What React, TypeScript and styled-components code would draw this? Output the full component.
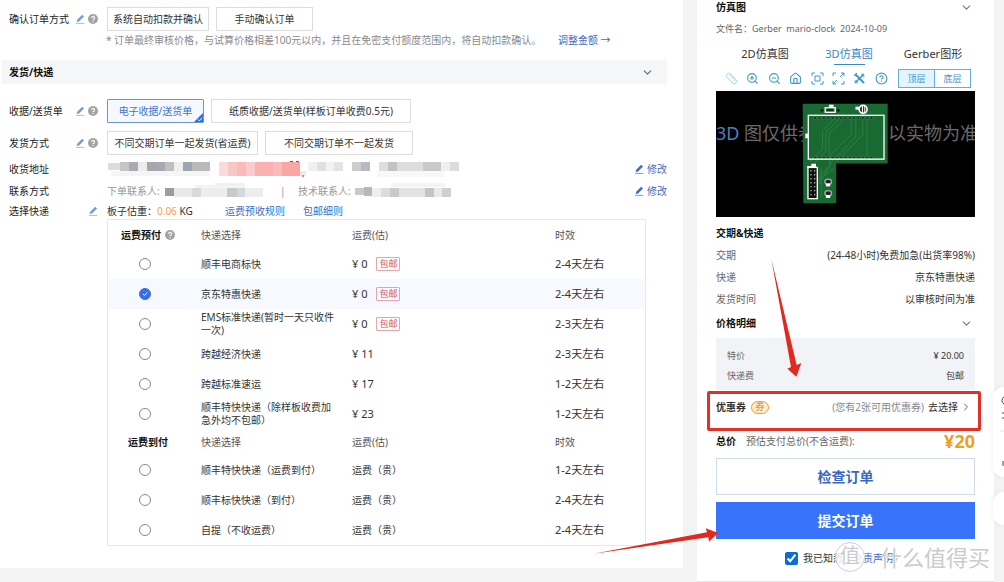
import React, { useState } from "react";
import styled, { createGlobalStyle, css } from "styled-components";
import {
  ChevronDown,
  ChevronRight,
  CircleHelp,
  House,
  Ruler,
  ZoomIn,
  ZoomOut,
} from "lucide-react";

const GlobalStyle = createGlobalStyle`
  * { box-sizing: border-box; }
  body {
    margin: 0;
    background: #f3f3f4;
    color: #333;
    font: 10px/14px "Noto Sans", "Noto Sans CJK SC", sans-serif;
  }
  button, input { font: inherit; color: inherit; margin: 0; }
  button { padding: 0; cursor: pointer; }
  a { color: #3d6cc0; text-decoration: none; }
`;

const Page = styled.div`
  display: flex;
  align-items: flex-start;
  gap: 14px;
  padding-right: 10px;
`;

/* ---------- order form ---------- */

const FormPanel = styled.main`
  flex: 1;
  min-width: 0;
  background: #fff;
  padding: 7px 16px 22px 2px;
`;

const FormRow = styled.div<{ $height?: number; $gap?: number }>`
  display: flex;
  align-items: center;
  min-height: ${(p) => p.$height ?? 24}px;
  margin-top: ${(p) => p.$gap ?? 0}px;
  padding-left: 7px;
`;

const RowLabel = styled.div`
  flex: 0 0 98px;
  display: flex;
  align-items: center;
  gap: 3px;
  padding-right: 9px;
  color: #222;
  svg { display: block; }
`;

const LabelText = styled.span`
  flex: 1;
  white-space: nowrap;
`;

const Options = styled.div`
  display: flex;
  gap: 7px;
`;

const OptionButton = styled.button<{ $width: number; $selected?: boolean }>`
  position: relative;
  width: ${(p) => p.$width}px;
  height: 24px;
  border: 1px solid #dcdcdc;
  background: #fff;
  white-space: nowrap;
  overflow: hidden;
  ${(p) =>
    p.$selected &&
    css`
      border-color: #6d94cf;
      background: #f5f9ff;
      color: #3f74c8;
      border-radius: 1px;
    `}
`;

const SelectedCorner = styled.svg`
  position: absolute;
  right: 0;
  bottom: 0;
`;

const Note = styled.p`
  display: flex;
  margin: 2px 0 0;
  padding-left: 104px;
  color: #8a8a8a;
  line-height: 14px;
  white-space: nowrap;
`;

const NoteText = styled.span`
  flex: 0 0 452px;
`;

const SectionBar = styled.h2`
  display: flex;
  align-items: center;
  justify-content: space-between;
  height: 24px;
  margin: 13px 0 0;
  padding: 0 13px 0 7px;
  background: #f5f6f8;
  color: #111;
  font-size: 10px;
`;

const Masked = styled.svg`
  display: block;
  flex: none;
`;

const Muted = styled.span<{ $width: number }>`
  flex: 0 0 ${(p) => p.$width}px;
  color: #999;
  white-space: nowrap;
`;

const Modify = styled.a`
  display: flex;
  align-items: center;
  gap: 3px;
  margin-left: auto;
`;

const Weight = styled.span`
  flex: 0 0 118px;
  b { color: #eda53a; font-weight: 400; }
`;

const RuleLinks = styled.div`
  display: flex;
  gap: 18px;
`;

const CourierTable = styled.table`
  width: calc(100% - 126px);
  margin-left: 105px;
  border: 1px solid #e8e8e8;
  border-collapse: separate;
  border-spacing: 0;
  table-layout: fixed;
  th, td { padding: 0; text-align: left; vertical-align: middle; font-weight: 400; }
`;

const HeadRow = styled.tr<{ $height: number }>`
  height: ${(p) => p.$height}px;
  color: #555;
`;

const GroupTh = styled.th<{ $indent: number }>`
  && { padding-left: ${(p) => p.$indent}px; font-weight: 700; color: #111; white-space: nowrap; }
  svg { vertical-align: -1px; margin-left: 4px; }
`;

const CourierRow = styled.tr<{ $selected?: boolean }>`
  height: 30px;
  background: ${(p) => (p.$selected ? "#f6f9fe" : "#fff")};
`;

const Radio = styled.input`
  display: block;
  appearance: none;
  width: 12px;
  height: 12px;
  margin-left: 31px;
  border: 1px solid #888;
  border-radius: 50%;
  background: #fff;
  &:checked {
    border-color: #3a6fe0;
    background: #3a6fe0;
  }
`;

const RadioCell = styled.div`
  position: relative;
  svg { position: absolute; left: 34px; top: 3px; pointer-events: none; }
`;

const CourierName = styled.label`
  display: block;
  max-width: 138px;
  line-height: 13px;
`;

const Fee = styled.div`
  display: flex;
  align-items: center;
  gap: 9px;
  font-size: 11px;
`;

const FreeTag = styled.span`
  width: 24px;
  height: 14px;
  border: 1px solid #e8a3ab;
  border-radius: 1px;
  color: #d4505e;
  font-size: 9px;
  line-height: 12px;
  text-align: center;
`;

const Time = styled.span`
  font-size: 11px;
`;

/* ---------- summary ---------- */

const SidePanel = styled.aside`
  position: relative;
  flex: 0 0 297px;
  min-width: 0;
  background: #fff;
  border-bottom: 1px solid #e4e4e4;
  padding: 0 19px 16px;
`;

const SideTitle = styled.h3<{ $gap?: number }>`
  display: flex;
  align-items: center;
  justify-content: space-between;
  margin: ${(p) => p.$gap ?? 0}px 0 0;
  padding-right: 2px;
  color: #111;
  font-size: 10px;
  line-height: 14px;
`;

const FileName = styled.p`
  margin: 8px 0 0;
  color: #666;
  font-size: 9px;
  line-height: 14px;
`;

const Tabs = styled.div`
  display: grid;
  grid-template-columns: repeat(3, 1fr);
  margin-top: 10px;
  padding-left: 7px;
`;

const Tab = styled.button<{ $active?: boolean }>`
  display: flex;
  flex-direction: column;
  align-items: center;
  height: 20px;
  border: 0;
  background: none;
  color: ${(p) => (p.$active ? "#3a86c8" : "#333")};
  font-size: 11px;
  line-height: 16px;
  &::after {
    content: "";
    width: 31px;
    height: 1px;
    margin-top: 2px;
    background: ${(p) => (p.$active ? "#3a86c8" : "transparent")};
  }
`;

const Toolbar = styled.div`
  display: flex;
  align-items: center;
  justify-content: space-between;
  height: 25px;
  padding: 0 4px 0 9px;
`;

const ToolButton = styled.button<{ $faded?: boolean }>`
  border: 0;
  background: none;
  color: #3d98c4;
  opacity: ${(p) => (p.$faded ? 0.35 : 1)};
  svg { display: block; }
`;

const Layers = styled.div`
  display: flex;
  margin-left: 2px;
`;

const LayerButton = styled.button<{ $active?: boolean }>`
  width: 37px;
  height: 19px;
  border: 1px solid #62aede;
  background: ${(p) => (p.$active ? "#e2f4fd" : "#fff")};
  color: #4a92c6;
  font-size: 9px;
  line-height: 16px;
  & + & { margin-left: -1px; }
`;

const Viewer = styled.div`
  position: relative;
  height: 126px;
  padding-top: 30px;
  overflow: hidden;
  background: #000;
  color: #6a6a6a;
  font-size: 18px;
  line-height: 24px;
  white-space: nowrap;
  b { color: #4a80c0; font-weight: 400; }
`;

const Board = styled.svg`
  position: absolute;
  left: 86px;
  top: 12px;
`;

const Facts = styled.dl`
  margin: 4px 0 0;
`;

const Fact = styled.div<{ $height: number }>`
  display: flex;
  justify-content: space-between;
  align-items: center;
  height: ${(p) => p.$height}px;
  dt { color: #666; }
  dd { margin: 0; color: #333; }
`;

const PriceBox = styled.dl`
  margin: 8px 0 0;
  padding: 8px 11px 4px;
  background: #f2f3f6;
  font-size: 9px;
`;

const CouponRow = styled.div`
  display: flex;
  align-items: flex-start;
  height: 40px;
  margin: 1px -6px 0 -9px;
  padding: 6px 6px 0 6px;
  border: 3px solid #e03028;
  border-radius: 2px;
  white-space: nowrap;
  a { display: flex; align-items: center; gap: 2px; color: #333; }
`;

const CouponBadge = styled.span`
  width: 18px;
  height: 13px;
  margin: 1px auto 0 5px;
  border: 1px solid #e5a13c;
  border-radius: 7px;
  background: #fdeccb;
  color: #d98516;
  font-size: 9px;
  line-height: 10px;
  text-align: center;
`;

const Hint = styled.span`
  margin-right: 4px;
  color: #888;
`;

const TotalRow = styled.div`
  display: flex;
  align-items: center;
  gap: 10px;
  height: 20px;
  color: #666;
  b { color: #111; }
`;

const Total = styled.strong`
  margin-left: auto;
  color: #eda01f;
  font-size: 18px;
  line-height: 20px;
`;

const ActionButton = styled.button<{ $primary?: boolean; $gap: number }>`
  display: block;
  width: 100%;
  height: 37px;
  margin-top: ${(p) => p.$gap}px;
  border: 1px solid ${(p) => (p.$primary ? "#3773fb" : "#cfdbea")};
  background: ${(p) => (p.$primary ? "#3773fb" : "#fff")};
  color: ${(p) => (p.$primary ? "#fff" : "#3a68c0")};
  font-size: 14px;
  font-weight: 700;
`;

const Agreement = styled.div`
  display: flex;
  align-items: center;
  gap: 5px;
  height: 14px;
  margin-top: 12px;
  padding-left: 69px;
  input { width: 13px; height: 13px; accent-color: #0a6cd6; }
`;

const Watermark = styled.div`
  position: absolute;
  left: 138px;
  bottom: 9px;
  display: flex;
  align-items: center;
  gap: 15px;
  color: #c9ccd0;
  font-size: 22px;
  line-height: 30px;
  white-space: nowrap;
  text-shadow: 0 0 1px #fff, 1px 1px 0 #fff;
  pointer-events: none;
`;

const WatermarkSeal = styled.span`
  width: 30px;
  height: 30px;
  border: 1px solid #cdd0d4;
  border-radius: 50%;
  background: rgba(255, 255, 255, 0.85);
  font-size: 20px;
  line-height: 26px;
  text-align: center;
`;

const Arrow = styled.svg<{ $left: number; $top: number }>`
  position: absolute;
  left: ${(p) => p.$left}px;
  top: ${(p) => p.$top}px;
  pointer-events: none;
`;

const Dock = styled.nav`
  position: fixed;
  right: 0;
  top: 387px;
  width: 11px;
  display: flex;
  flex-direction: column;
  gap: 15px;
`;

const DockCard = styled.div<{ $height: number }>`
  height: ${(p) => p.$height}px;
  border-radius: 11px 0 0 11px;
  background: #fff;
  box-shadow: 0 0 5px rgba(0, 0, 0, 0.08);
  svg { display: block; }
`;

function EditIcon({ strong }: { strong?: boolean }) {
  const color = strong ? "#3d6cc0" : "#6f9fd8";
  return (
    <svg width="10" height="10" viewBox="0 0 10 10" aria-hidden="true">
      <path d="M1.6 8.1 2.2 5.8 7.2.8 9 2.5 4 7.5Z" fill={color} />
      <path d="M1 9.4H9.4" stroke={color} strokeWidth="1" opacity=".65" />
    </svg>
  );
}

function HelpIcon() {
  return (
    <svg width="10" height="10" viewBox="0 0 10 10" aria-hidden="true">
      <circle cx="5" cy="5" r="5" fill="#a3a3a3" />
      <path d="M3.5 4a1.5 1.5 0 1 1 2.3 1.2C5.2 5.500 5 5.700 5 6.300M5 7.200v1" fill="none" stroke="#fff" strokeWidth="1.100" />
    </svg>
  );
}

type Block = [x: number, y: number, w: number, h: number, fill: string];

function Mosaic({ width, height, blocks }: { width: number; height: number; blocks: Block[] }) {
  return (
    <Masked width={width} height={height} aria-hidden="true" shapeRendering="crispEdges">
      {blocks.map(([x, y, w, h, fill], i) => (
        <rect key={i} x={x} y={y} width={w} height={h} fill={fill} />
      ))}
    </Masked>
  );
}

const addressBlocks: Block[] = [
  [4, 10, 98, 5, "#f5f5f5"], [126, 10, 57, 5, "#f8f8f8"], [183, 10, 16, 5, "#fde3e3"], [270, 10, 68, 6, "#f8f8f8"],
  [1, 2, 12, 7, "#dcdcdc"], [13, 1, 9, 9, "#c6c6c6"], [22, 1, 9, 9, "#a9abb0"], [31, 1, 9, 9, "#ececec"],
  [40, 1, 9, 9, "#a6a7aa"], [49, 1, 9, 9, "#a7a9b2"], [58, 1, 9, 9, "#bfbfbd"], [67, 1, 9, 9, "#efefef"],
  [76, 1, 9, 9, "#9ea4b2"], [85, 1, 18, 9, "#b9bab9"], [112, 1, 9, 14, "#fbdada"], [121, 1, 9, 14, "#f7c6c6"],
  [130, 1, 9, 14, "#fbb9b9"], [139, 1, 9, 14, "#f8cccc"], [148, 1, 18, 14, "#fbb0b0"], [166, 1, 9, 14, "#f7bcbc"],
  [175, 1, 18, 14, "#fba5a5"], [183, 0, 3, 1, "#b63a3a"], [189, 0, 3, 1, "#b63a3a"], [195, 14, 2, 2, "#e88"],
  [201, 1, 9, 9, "#f0f0f0"], [210, 1, 9, 9, "#dfe0e2"], [219, 1, 9, 9, "#f2f2f2"], [227, 1, 9, 9, "#e4e4e4"],
  [245, 1, 9, 9, "#cdcdcd"], [254, 1, 9, 9, "#b5bac0"], [272, 1, 9, 9, "#dedede"], [281, 1, 9, 9, "#c3c3c4"],
  [290, 1, 26, 9, "#dcdddd"], [316, 1, 18, 9, "#c7c9cc"], [334, 1, 9, 9, "#efefef"], [343, 1, 9, 9, "#dcdcdc"],
];

const orderContactBlocks: Block[] = [
  [50, 0, 30, 4, "#eef0f0"], [30, 2, 50, 4, "#f2f3f3"],
  [0, 5, 9, 8, "#a19a98"], [9, 5, 18, 9, "#e9e9e9"], [27, 5, 9, 9, "#d9d9d9"], [36, 5, 26, 9, "#ededed"],
  [62, 5, 10, 9, "#c9c9ca"], [72, 5, 8, 9, "#d5d8da"], [80, 5, 18, 9, "#ededed"],
];

const techContactBlocks: Block[] = [
  [36, 0, 54, 4, "#f4f4f4"], [0, 5, 9, 7, "#c9c9c6"], [9, 4, 8, 9, "#b4b8be"], [17, 5, 9, 9, "#eee"],
  [26, 5, 9, 9, "#dcdcdc"], [35, 5, 9, 9, "#c9c9c9"], [44, 5, 26, 9, "#e2e2e2"], [70, 5, 9, 9, "#c3c4c8"],
  [79, 5, 8, 9, "#e9e9e9"], [87, 5, 9, 9, "#cfcfcf"],
];

interface Courier {
  id: string;
  name: string;
  fee: string;
  free?: boolean;
  time: string;
}

const prepaid: Courier[] = [
  { id: "sf-eco", name: "顺丰电商标快", fee: "¥ 0", free: true, time: "2-4天左右" },
  { id: "jd", name: "京东特惠快递", fee: "¥ 0", free: true, time: "2-4天左右" },
  { id: "ems", name: "EMS标准快递(暂时一天只收件一次)", fee: "¥ 0", free: true, time: "2-3天左右" },
  { id: "ky-eco", name: "跨越经济快递", fee: "¥ 11", time: "2-3天左右" },
  { id: "ky-std", name: "跨越标准速运", fee: "¥ 17", time: "1-2天左右" },
  { id: "sf-fast", name: "顺丰特快快递（除样板收费加急外均不包邮）", fee: "¥ 23", time: "1-2天左右" },
];

const collect: Courier[] = [
  { id: "sf-fast-c", name: "顺丰特快快递（运费到付）", fee: "运费（贵）", time: "1-2天左右" },
  { id: "sf-std-c", name: "顺丰标快快递（到付）", fee: "运费（贵）", time: "2-4天左右" },
  { id: "pickup", name: "自提（不收运费）", fee: "运费（贵）", time: "2-4天左右" },
];

function PcbBoard() {
  const pins = Array.from({ length: 14 }, (_, i) => 362 + i * 13);
  return (
    <Board width="87" height="101" viewBox="322 46 262 304" role="img" aria-label="PCB">
      <path d="M324 48H580V228H425V348H326Z" fill="#186a32" />
      <path
        d="M420 92 384 130V185L345 222M432 96 394 134V190L352 236M444 98 404 138V200M470 92V140L405 205V235L370 275M484 92V148L412 222L374 290M505 92V142L425 222M518 92V210M380 240V330M345 300 420 240"
        fill="none"
        stroke="#2f7d42"
        strokeWidth="3"
      />
      {pins.map((x) => (
        <React.Fragment key={x}>
          <circle cx={x} cy="91" r="4" fill="#0b2b15" stroke="#7fa987" />
          <circle cx={x} cy="210" r="4" fill="#0b2b15" stroke="#7fa987" />
        </React.Fragment>
      ))}
      <rect x="341" y="83" width="228" height="132" fill="none" stroke="#fff" strokeWidth="4" />
      <rect x="332" y="138" width="9" height="14" fill="#fff" />
      <rect x="392" y="60" width="30" height="14" fill="#186a32" stroke="#fff" strokeWidth="4" />
      <rect x="403" y="51" width="14" height="9" fill="#fff" />
      <rect x="398" y="65" width="18" height="4" fill="#111" />
      <circle cx="382" cy="68" r="4" fill="#111" />
      <circle cx="431" cy="68" r="4" fill="#111" />
      <path d="M483 57H495V66H483Z" fill="#fff" />
      <circle cx="506" cy="65" r="12" fill="#333" stroke="#fff" strokeWidth="5" />
      <path d="M504 54V76M511 54V76" stroke="#fff" strokeWidth="3" />
      <rect x="340" y="240" width="28" height="94" fill="#111" stroke="#fff" strokeWidth="4" />
      <path d="M337 236H350V229H364V240H337Z" fill="#fff" />
      <path d="M349 248V330M360 248V330" stroke="#9ab39d" strokeWidth="4" strokeDasharray="4 8" />
      {[283, 318].map((y) => (
        <g key={y}>
          <ellipse cx="401" cy={y} rx="10" ry="8" fill="#222" stroke="#aaa" strokeWidth="4" />
          <rect x="394" y={y + 5} width="13" height="9" fill="#fff" />
        </g>
      ))}
    </Board>
  );
}

export default function App() {
  const [courier, setCourier] = useState("jd");
  const [agreed, setAgreed] = useState(true);

  const renderRows = (items: Courier[]) =>
    items.map((c) => (
      <CourierRow key={c.id} $selected={courier === c.id}>
        <td>
          <RadioCell>
            <Radio
              type="radio"
              name="courier"
              id={c.id}
              checked={courier === c.id}
              onChange={() => setCourier(c.id)}
            />
            {courier === c.id && (
              <svg width="6" height="6" viewBox="0 0 6 6" aria-hidden="true">
                <path d="M1 3 2.500 4.500 5.200 1.600" fill="none" stroke="#fff" />
              </svg>
            )}
          </RadioCell>
        </td>
        <td>
          <CourierName htmlFor={c.id}>{c.name}</CourierName>
        </td>
        <td>
          {c.fee.startsWith("¥") ? (
            <Fee>
              <span>{c.fee}</span>
              {c.free && <FreeTag>包邮</FreeTag>}
            </Fee>
          ) : (
            c.fee
          )}
        </td>
        <td>
          <Time>{c.time}</Time>
        </td>
      </CourierRow>
    ));

  return (
    <>
      <GlobalStyle />
      <Page>
        <FormPanel>
          <FormRow>
            <RowLabel>
              <LabelText>确认订单方式</LabelText>
              <EditIcon />
              <HelpIcon />
            </RowLabel>
            <Options>
              <OptionButton $width={102}>系统自动扣款并确认</OptionButton>
              <OptionButton $width={97}>手动确认订单</OptionButton>
            </Options>
          </FormRow>
          <Note>
            <NoteText>* 订单最终审核价格，与试算价格相差100元以内，并且在免密支付额度范围内，将自动扣款确认。</NoteText>
            <a href="#amount">调整金额 →</a>
          </Note>

          <SectionBar>
            发货/快递
            <ChevronDown size={13} strokeWidth={2} color="#666" />
          </SectionBar>

          <FormRow $gap={15}>
            <RowLabel>
              <LabelText>收据/送货单</LabelText>
              <EditIcon />
              <HelpIcon />
            </RowLabel>
            <Options>
              <OptionButton $width={97} $selected>
                电子收据/送货单
                <SelectedCorner width="9" height="9" viewBox="0 0 9 9" aria-hidden="true">
                  <path d="M9 0V9H0Z" fill="#2f6be0" />
                  <path d="M4 6.500 5.500 7.800 8 4.800" fill="none" stroke="#fff" />
                </SelectedCorner>
              </OptionButton>
              <OptionButton $width={200}>纸质收据/送货单(样板订单收费0.5元)</OptionButton>
            </Options>
          </FormRow>
          <FormRow $gap={8}>
            <RowLabel>
              <LabelText>发货方式</LabelText>
              <EditIcon />
              <HelpIcon />
            </RowLabel>
            <Options>
              <OptionButton $width={151}>不同交期订单一起发货(省运费)</OptionButton>
              <OptionButton $width={148}>不同交期订单不一起发货</OptionButton>
            </Options>
          </FormRow>
          <FormRow $gap={3} $height={22}>
            <RowLabel>
              <LabelText>收货地址</LabelText>
            </RowLabel>
            <Mosaic width={352} height={16} blocks={addressBlocks} />
            <Modify href="#address">
              <EditIcon strong />
              修改
            </Modify>
          </FormRow>
          <FormRow $height={22}>
            <RowLabel>
              <LabelText>联系方式</LabelText>
            </RowLabel>
            <Muted $width={58}>下单联系人:</Muted>
            <Mosaic width={115} height={16} blocks={orderContactBlocks} />
            <Muted $width={18}>|</Muted>
            <Muted $width={57}>技术联系人:</Muted>
            <Mosaic width={98} height={16} blocks={techContactBlocks} />
            <Modify href="#contact">
              <EditIcon strong />
              修改
            </Modify>
          </FormRow>
          <FormRow $height={17}>
            <RowLabel>
              <LabelText>选择快递</LabelText>
              <EditIcon />
            </RowLabel>
            <Weight>
              板子估重：<b>0.06</b> KG
            </Weight>
            <RuleLinks>
              <a href="#fee-rules">运费预收规则</a>
              <a href="#free-rules">包邮细则</a>
            </RuleLinks>
          </FormRow>

          <CourierTable>
            <colgroup>
              <col style={{ width: 93 }} />
              <col style={{ width: 151 }} />
              <col />
              <col style={{ width: 90 }} />
            </colgroup>
            <tbody>
              <HeadRow $height={29}>
                <GroupTh scope="col" $indent={13}>
                  运费预付
                  <HelpIcon />
                </GroupTh>
                <th scope="col">快递选择</th>
                <th scope="col">运费(估)</th>
                <th scope="col">时效</th>
              </HeadRow>
              {renderRows(prepaid)}
            </tbody>
            <tbody>
              <HeadRow $height={26}>
                <GroupTh scope="col" $indent={20}>运费到付</GroupTh>
                <th scope="col">快递选择</th>
                <th scope="col">运费(估)</th>
                <th scope="col">时效</th>
              </HeadRow>
              {renderRows(collect)}
            </tbody>
          </CourierTable>
        </FormPanel>

        <SidePanel>
          <SideTitle>
            仿真图
            <ChevronDown size={13} strokeWidth={2} color="#777" />
          </SideTitle>
          <FileName>文件名：Gerber&nbsp; mario-clock&nbsp; 2024-10-09</FileName>
          <Tabs role="tablist">
            <Tab role="tab">2D仿真图</Tab>
            <Tab role="tab" $active aria-selected="true">3D仿真图</Tab>
            <Tab role="tab">Gerber图形</Tab>
          </Tabs>
          <Toolbar>
            <ToolButton $faded aria-label="测量"><Ruler size={13} strokeWidth={2} /></ToolButton>
            <ToolButton aria-label="放大"><ZoomIn size={13} strokeWidth={2} /></ToolButton>
            <ToolButton aria-label="缩小"><ZoomOut size={13} strokeWidth={2} /></ToolButton>
            <ToolButton aria-label="主页"><House size={13} strokeWidth={2} /></ToolButton>
            <ToolButton aria-label="适应">
              <svg width="13" height="13" viewBox="0 0 13 13" fill="none" stroke="currentColor">
                <path d="M1 4V1H4M9 1H12V4M12 9V12H9M4 12H1V9M4 4H9V9H4Z" />
              </svg>
            </ToolButton>
            <ToolButton aria-label="全屏">
              <svg width="13" height="13" viewBox="0 0 13 13" fill="none" stroke="currentColor">
                <path d="M1 4V1H4M9 1H12V4M12 9V12H9M4 12H1V9M12 1 8 5M1 12 5 8" />
              </svg>
            </ToolButton>
            <ToolButton aria-label="工具">
              <svg width="13" height="13" viewBox="0 0 13 13" fill="none" stroke="currentColor">
                <path d="M2 2 11 11" strokeWidth="2" />
                <path d="M11 2 2 11" strokeWidth="1.500" />
                <path d="M1 4 4 1M9 1.500V4H11.500M1.500 9H4V11.500" />
              </svg>
            </ToolButton>
            <ToolButton aria-label="帮助"><CircleHelp size={13} strokeWidth={2} /></ToolButton>
            <Layers>
              <LayerButton $active>顶层</LayerButton>
              <LayerButton>底层</LayerButton>
            </Layers>
          </Toolbar>
          <Viewer>
            <b>3D</b> 图仅供参考，具体以实物为准
            <PcbBoard />
          </Viewer>

          <SideTitle $gap={9}>交期&amp;快递</SideTitle>
          <Facts>
            <Fact $height={22}>
              <dt>交期</dt>
              <dd>(24-48小时)免费加急(出货率98%)</dd>
            </Fact>
            <Fact $height={22}>
              <dt>快递</dt>
              <dd>京东特惠快递</dd>
            </Fact>
            <Fact $height={22}>
              <dt>发货时间</dt>
              <dd>以审核时间为准</dd>
            </Fact>
          </Facts>
          <SideTitle $gap={6}>
            价格明细
            <ChevronDown size={13} strokeWidth={2} color="#777" />
          </SideTitle>
          <PriceBox>
            <Fact $height={20}>
              <dt>特价</dt>
              <dd>¥ 20.00</dd>
            </Fact>
            <Fact $height={20}>
              <dt>快递费</dt>
              <dd>包邮</dd>
            </Fact>
          </PriceBox>
          <CouponRow>
            <b>优惠券</b>
            <CouponBadge>券</CouponBadge>
            <Hint>(您有2张可用优惠券)</Hint>
            <a href="#coupons">
              去选择
              <ChevronRight size={12} strokeWidth={2} color="#666" />
            </a>
          </CouponRow>
          <TotalRow>
            <b>总价</b>
            预估支付总价(不含运费):
            <Total>¥20</Total>
          </TotalRow>
          <ActionButton $gap={7}>检查订单</ActionButton>
          <ActionButton $gap={7} $primary>提交订单</ActionButton>
          <Agreement>
            <input
              id="agree"
              type="checkbox"
              checked={agreed}
              onChange={(e) => setAgreed(e.target.checked)}
            />
            <label htmlFor="agree">
              我已知悉<a href="#disclaimer">《免责声明》</a>
            </label>
          </Agreement>

          <Watermark>
            <WatermarkSeal>值</WatermarkSeal>
            什么值得买
          </Watermark>
          <Arrow $left={73} $top={258} width="33" height="120" viewBox="225 115 99 360" aria-hidden="true">
            <path d="M229 118 305 436 319 430 304 471 277 447 288 442Z" fill="#e02a20" />
          </Arrow>
          <Arrow $left={-104} $top={527} width="127" height="28" viewBox="40 80 381 84" aria-hidden="true">
            <path d="M42 160 382 96 378 84 416 98 388 124 386 111Z" fill="#e02a20" />
          </Arrow>
        </SidePanel>
      </Page>
      <Dock aria-label="快捷工具">
        <DockCard $height={90}>
          <svg width="11" height="90" aria-hidden="true">
            <path d="M11 10a4 4 0 0 0 0 7M9 26H11M9 31H11M10 74V79" stroke="#444" fill="none" />
            <path d="M7 44H11" stroke="#e5e5e5" />
          </svg>
        </DockCard>
        <DockCard $height={33} />
      </Dock>
    </>
  );
}
